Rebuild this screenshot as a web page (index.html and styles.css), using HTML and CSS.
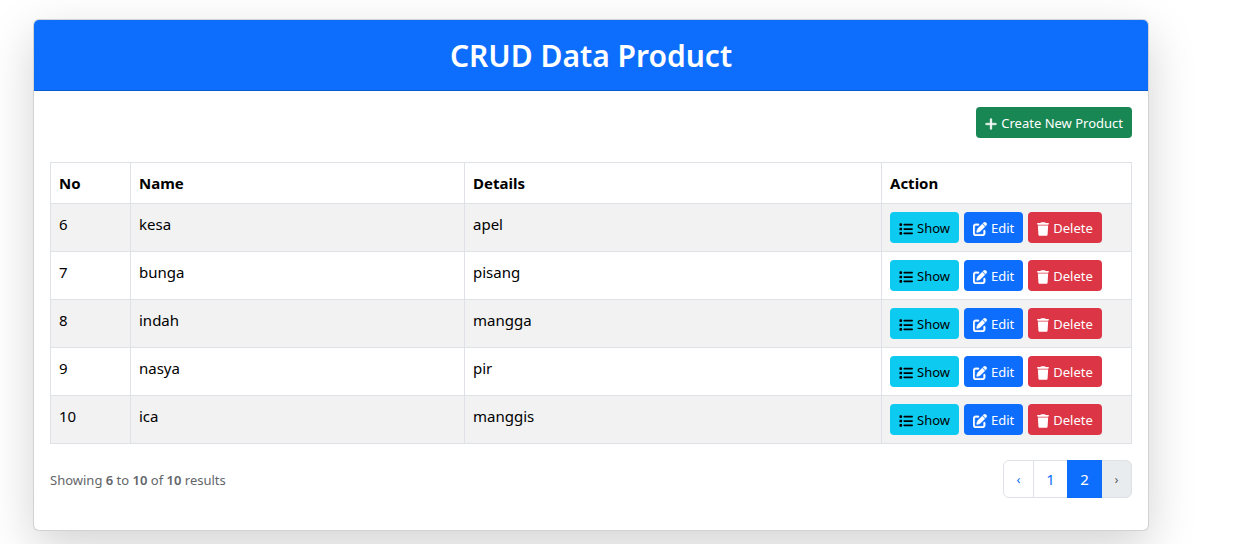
FILE: index.html
```html
<!DOCTYPE html>
<html lang="en">
<head>
<meta charset="utf-8">
<meta name="viewport" content="width=device-width, initial-scale=1">
<title>CRUD Data Product</title>
<link rel="stylesheet" href="styles.css">
</head>
<body>
<svg class="sprite" aria-hidden="true">
  <symbol id="plus" viewBox="0 0 448 512"><path d="M256 80c0-17.700-14.300-32-32-32s-32 14.300-32 32V224H48c-17.700 0-32 14.300-32 32s14.300 32 32 32H192V432c0 17.700 14.300 32 32 32s32-14.300 32-32V288H400c17.700 0 32-14.300 32-32s-14.300-32-32-32H256V80z" stroke="currentColor" stroke-width="16"/></symbol>
  <symbol id="list" viewBox="0 0 512 512"><path d="M40 48C26.700 48 16 58.700 16 72v48c0 13.300 10.700 24 24 24H88c13.300 0 24-10.700 24-24V72c0-13.300-10.700-24-24-24H40zM192 64c-17.700 0-32 14.300-32 32s14.300 32 32 32H480c17.700 0 32-14.300 32-32s-14.300-32-32-32H192zm0 160c-17.700 0-32 14.300-32 32s14.300 32 32 32H480c17.700 0 32-14.300 32-32s-14.300-32-32-32H192zm0 160c-17.700 0-32 14.300-32 32s14.300 32 32 32H480c17.700 0 32-14.300 32-32s-14.300-32-32-32H192zM16 232v48c0 13.300 10.700 24 24 24H88c13.300 0 24-10.700 24-24V232c0-13.300-10.700-24-24-24H40c-13.300 0-24 10.700-24 24zM40 368c-13.300 0-24 10.700-24 24v48c0 13.300 10.700 24 24 24H88c13.300 0 24-10.700 24-24V392c0-13.300-10.700-24-24-24H40z"/></symbol>
  <symbol id="edit" viewBox="0 0 512 512"><path d="M471.600 21.700c-21.900-21.900-57.300-21.900-79.200 0L362.300 51.700l97.900 97.900 30.100-30.100c21.900-21.900 21.900-57.300 0-79.200L471.600 21.700zm-299.200 220c-6.100 6.100-10.800 13.600-13.500 21.900l-29.600 88.800c-2.900 8.600-.6 18.100 5.800 24.600s15.900 8.700 24.600 5.800l88.800-29.600c8.200-2.700 15.700-7.400 21.900-13.500L437.700 172.300 339.700 74.300 172.400 241.700zM96 64C43 64 0 107 0 160V416c0 53 43 96 96 96H352c53 0 96-43 96-96V320c0-17.700-14.300-32-32-32s-32 14.300-32 32v96c0 17.700-14.300 32-32 32H96c-17.700 0-32-14.300-32-32V160c0-17.700 14.300-32 32-32h96c17.700 0 32-14.300 32-32s-14.300-32-32-32H96z" stroke="currentColor" stroke-width="12"/></symbol>
  <symbol id="trash" viewBox="0 0 448 512"><path d="M135.200 17.700L128 32H32C14.300 32 0 46.300 0 64S14.300 96 32 96H416c17.700 0 32-14.300 32-32s-14.300-32-32-32H320l-7.200-14.300C307.400 6.800 296.300 0 284.200 0H163.800c-12.100 0-23.200 6.800-28.600 17.700zM416 128H32L53.200 467c1.600 25.300 22.600 45 47.900 45H346.900c25.300 0 46.300-19.700 47.900-45L416 128z"/></symbol>
</svg>
<main class="container">
  <section class="card">
    <header class="card-header"><h1 class="title">CRUD Data Product</h1></header>
    <div class="card-body">
      <div class="toolbar">
        <a class="btn btn-success" href="#"><svg class="icon icon-narrow"><use href="#plus"/></svg>Create New Product</a>
      </div>
      <table class="table">
        <colgroup><col class="col-no"><col class="col-name"><col class="col-details"><col class="col-action"></colgroup>
        <thead><tr><th scope="col">No</th><th scope="col">Name</th><th scope="col">Details</th><th scope="col">Action</th></tr></thead>
        <tbody>
          <tr><td>6</td><td>kesa</td><td>apel</td><td><div class="actions"><a class="btn btn-info" href="#"><svg class="icon"><use href="#list"/></svg>Show</a><a class="btn btn-primary" href="#"><svg class="icon"><use href="#edit"/></svg>Edit</a><button class="btn btn-danger" type="button"><svg class="icon icon-narrow"><use href="#trash"/></svg>Delete</button></div></td></tr>
          <tr><td>7</td><td>bunga</td><td>pisang</td><td><div class="actions"><a class="btn btn-info" href="#"><svg class="icon"><use href="#list"/></svg>Show</a><a class="btn btn-primary" href="#"><svg class="icon"><use href="#edit"/></svg>Edit</a><button class="btn btn-danger" type="button"><svg class="icon icon-narrow"><use href="#trash"/></svg>Delete</button></div></td></tr>
          <tr><td>8</td><td>indah</td><td>mangga</td><td><div class="actions"><a class="btn btn-info" href="#"><svg class="icon"><use href="#list"/></svg>Show</a><a class="btn btn-primary" href="#"><svg class="icon"><use href="#edit"/></svg>Edit</a><button class="btn btn-danger" type="button"><svg class="icon icon-narrow"><use href="#trash"/></svg>Delete</button></div></td></tr>
          <tr><td>9</td><td>nasya</td><td>pir</td><td><div class="actions"><a class="btn btn-info" href="#"><svg class="icon"><use href="#list"/></svg>Show</a><a class="btn btn-primary" href="#"><svg class="icon"><use href="#edit"/></svg>Edit</a><button class="btn btn-danger" type="button"><svg class="icon icon-narrow"><use href="#trash"/></svg>Delete</button></div></td></tr>
          <tr><td>10</td><td>ica</td><td>manggis</td><td><div class="actions"><a class="btn btn-info" href="#"><svg class="icon"><use href="#list"/></svg>Show</a><a class="btn btn-primary" href="#"><svg class="icon"><use href="#edit"/></svg>Edit</a><button class="btn btn-danger" type="button"><svg class="icon icon-narrow"><use href="#trash"/></svg>Delete</button></div></td></tr>
        </tbody>
      </table>
      <div class="card-footer">
        <p class="summary">Showing <span class="strong">6</span> to <span class="strong">10</span> of <span class="strong">10</span> results</p>
        <nav aria-label="Pagination">
          <ul class="pagination">
            <li><a class="page page-arrow" href="#" aria-label="Previous">‹</a></li>
            <li><a class="page" href="#">1</a></li>
            <li><span class="page active" aria-current="page">2</span></li>
            <li><span class="page page-arrow disabled" aria-disabled="true">›</span></li>
          </ul>
        </nav>
      </div>
    </div>
  </section>
</main>
</body>
</html>
```
FILE: styles.css
```css
* { box-sizing: border-box; }
body {
  margin: 0;
  background: #fff;
  color: #000;
  font: 15px/24px "Segoe UI", "Noto Sans", sans-serif;
  overflow: hidden;
}
.sprite { display: none; }
.container { padding: 19px 99px 24px 33px; }
.card {
  background: #fff;
  border: 1px solid rgba(0, 0, 0, .176);
  border-radius: 6px;
  box-shadow: 0 16px 48px rgba(0, 0, 0, .175);
}
.card-header {
  padding: 17px 16px 15px;
  background: #0d6efd;
  border-bottom: 1px solid #0b5bd1;
  border-radius: 5px 5px 0 0;
  color: #fff;
  text-align: center;
}
.title { margin: 0; font-size: 30px; line-height: 38px; font-weight: 600; }
.card-body { padding: 16px 16px 32px; }
.toolbar { display: flex; justify-content: flex-end; margin-bottom: 24px; }
.btn {
  display: inline-flex;
  align-items: center;
  gap: 4px;
  padding: 5px 8px 3px;
  border: 1px solid transparent;
  border-radius: 4px;
  color: #fff;
  font: inherit;
  font-size: 13px;
  line-height: 21px;
  text-decoration: none;
  white-space: nowrap;
  cursor: pointer;
}
.btn-success { background: #198754; }
.btn-info { background: #0dcaf0; color: #000; }
.btn-primary { background: #0d6efd; }
.btn-danger { background: #dc3545; }
.icon { width: 14px; height: 14px; flex: none; fill: currentColor; }
.icon-narrow { width: 12px; }
.actions { display: flex; gap: 5px; }
.table { width: 100%; border-collapse: collapse; table-layout: fixed; }
.col-no { width: 80px; }
.col-name { width: 334px; }
.col-action { width: 250px; }
.table th, .table td {
  padding: 8px;
  border: 1px solid #dee2e6;
  text-align: left;
  vertical-align: top;
}
.table th { font-weight: 700; }
.table tbody tr:nth-child(odd) { background: #f2f2f2; }
.card-footer {
  display: flex;
  justify-content: space-between;
  align-items: center;
  margin-top: 16px;
}
.summary { margin: 0; padding-top: 2px; color: #636669; font-size: 13px; }
.strong { font-weight: 600; }
.pagination { display: flex; margin: 0; padding: 0; list-style: none; }
.page {
  display: block;
  min-width: 35px;
  padding: 6px 12px;
  border: 1px solid #dee2e6;
  background: #fff;
  color: #0d6efd;
  text-align: center;
  text-decoration: none;
}
.page-arrow { min-width: 31px; font-size: 13px; }
.pagination li + li { margin-left: -1px; }
.pagination li:first-child .page { border-radius: 6px 0 0 6px; }
.pagination li:last-child .page { border-radius: 0 6px 6px 0; }
.page.active { position: relative; background: #0d6efd; border-color: #0d6efd; color: #fff; }
.page.disabled { background: #e9ecef; color: #595c5f; }
```
